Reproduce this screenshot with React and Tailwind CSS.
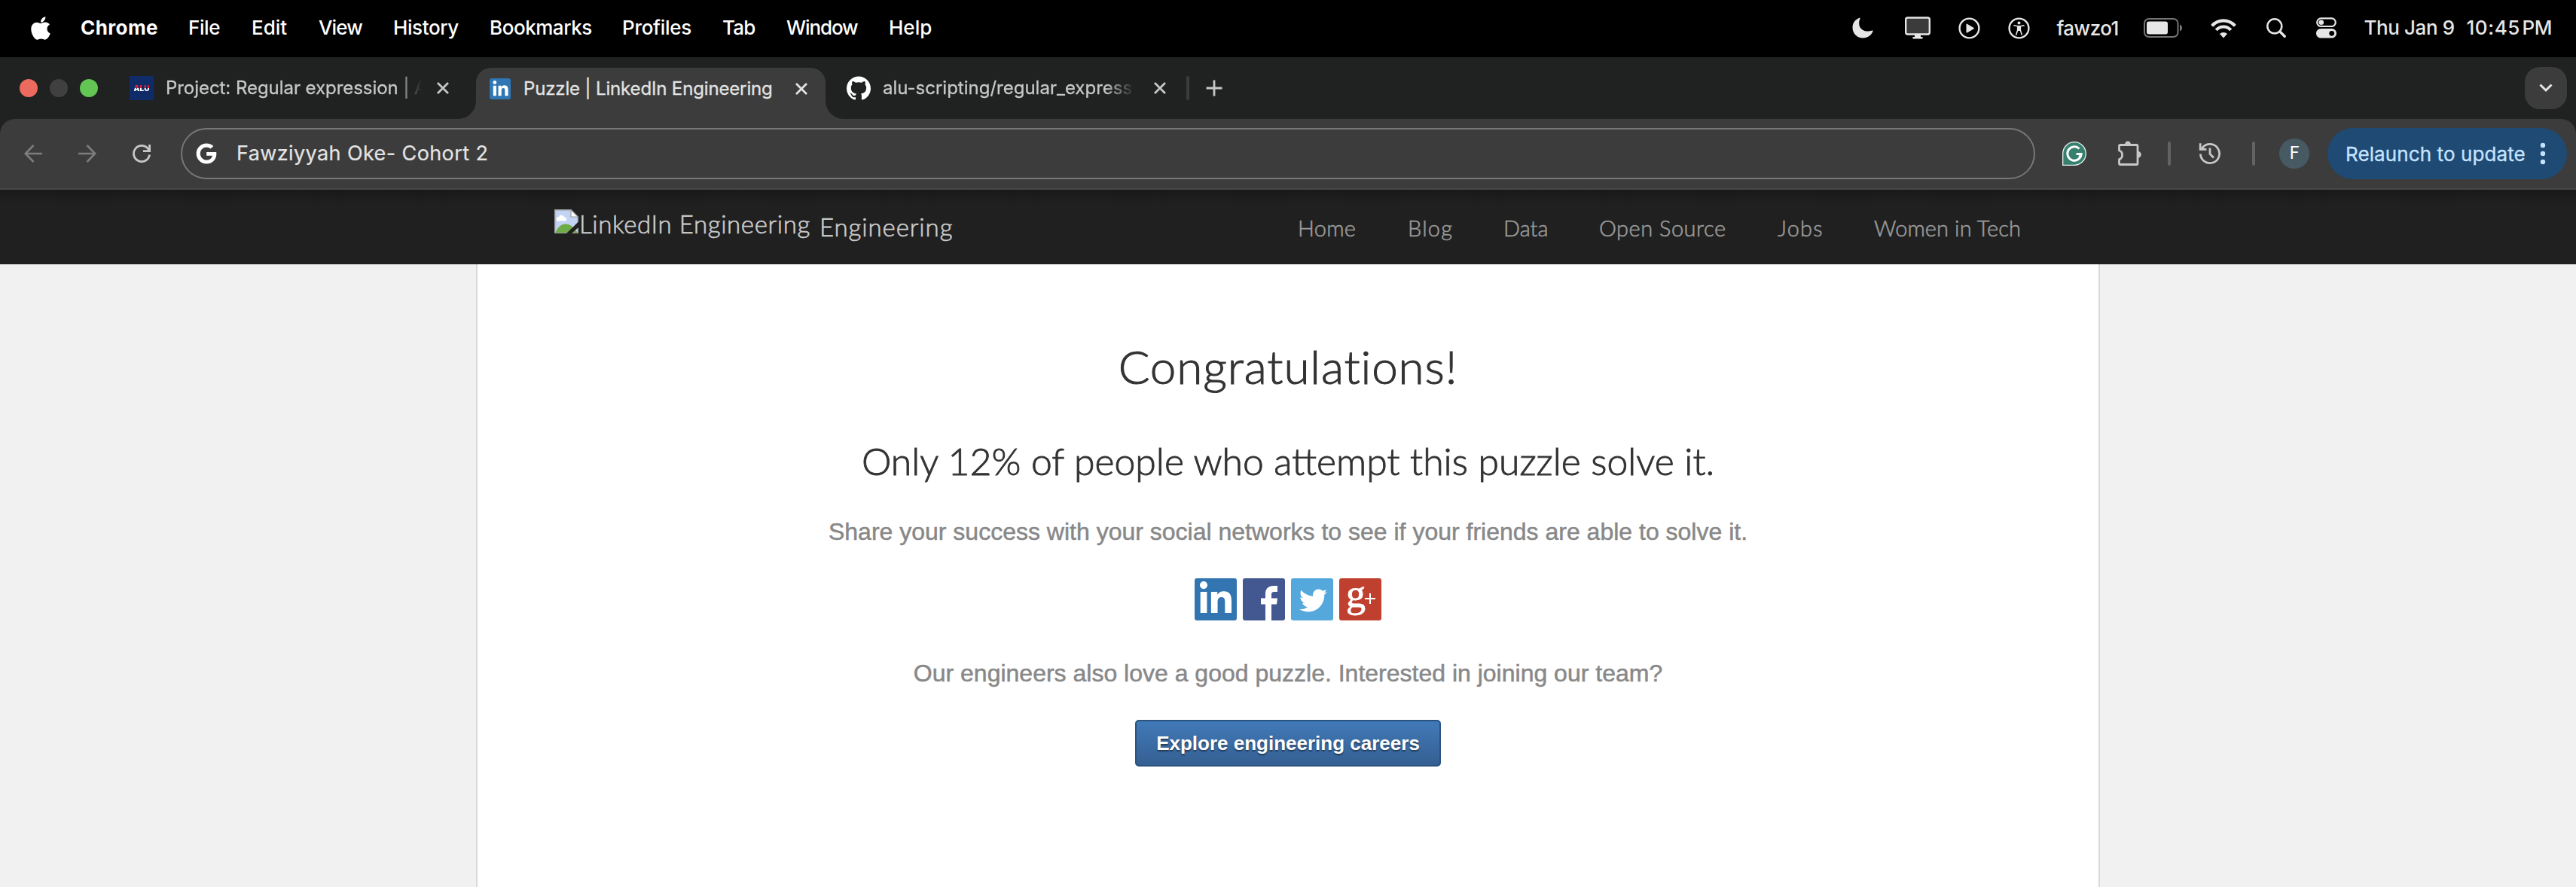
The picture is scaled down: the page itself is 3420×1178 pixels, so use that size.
import React from 'react';
import { FaApple, FaLinkedinIn, FaTwitter, FaGoogle } from 'react-icons/fa';
import { SiGithub } from 'react-icons/si';

const menus = [
  { label: 'Chrome', cls: 'w-[143px] font-bold tracking-[0.4px]' },
  { label: 'File', cls: 'w-[84px] tracking-[-0.4px]' },
  { label: 'Edit', cls: 'w-[89px]' },
  { label: 'View', cls: 'w-[99px] tracking-[-0.9px]' },
  { label: 'History', cls: 'w-[128px] tracking-[-0.4px]' },
  { label: 'Bookmarks', cls: 'w-[176px] tracking-[-0.45px]' },
  { label: 'Profiles', cls: 'w-[133px] tracking-[-0.3px]' },
  { label: 'Tab', cls: 'w-[85px] tracking-[-0.8px]' },
  { label: 'Window', cls: 'w-[136px] tracking-[-1.1px]' },
  { label: 'Help', cls: '' },
];

function MoonIcon() {
  return (
    <svg className="h-[28px] w-[28px]" viewBox="0 0 28 28" fill="#e6e6e6">
      <path d="M9.5 0.8C3.8 3 0.5 8 0.5 13.500C0.500 21.500 6.500 27.500 14.500 27.500C20.500 27.500 25.500 24 27.500 18.600C27.800 17.700 27.200 17.300 26.500 17.600C15.500 21.500 5.500 13.500 10.500 1.700C10.800 1 10.300 0.500 9.500 0.800Z" />
    </svg>
  );
}

function DisplayIcon() {
  return (
    <svg className="h-[30px] w-[34px]" viewBox="0 0 34 30">
      <rect x="1.200" y="1.500" width="31.600" height="22" rx="2.500" fill="#3b3b3b" stroke="#e6e6e6" strokeWidth="2.400" />
      <path d="M13 24h8v3h2.500v2.500h-13V27H13z" fill="#e6e6e6" />
    </svg>
  );
}

function PlayCircleIcon() {
  return (
    <svg className="h-[29px] w-[29px]" viewBox="0 0 29 29">
      <circle cx="14.500" cy="14.500" r="12.900" fill="none" stroke="#e6e6e6" strokeWidth="2.400" />
      <path d="M10.500 9.200v10.600c0 .7.500.9 1.100.6l8.600-5c.7-.4.700-1.200 0-1.600l-8.600-5c-.6-.4-1.100-.1-1.100.4z" fill="#e6e6e6" />
    </svg>
  );
}

function AccessibilityIcon() {
  return (
    <svg className="h-[29px] w-[29px]" viewBox="0 0 29 29" fill="none" stroke="#e6e6e6">
      <circle cx="14.500" cy="14.500" r="12.900" strokeWidth="2.400" />
      <circle cx="14.500" cy="7.500" r="2" fill="#e6e6e6" stroke="none" />
      <path d="M8 10.800l4.500 1h4l4.500-1M12.700 12v5l-1.900 6M16.300 12v5l1.900 6" strokeWidth="1.600" strokeLinecap="round" />
      <path d="M12.200 11.500h4.600v6.500h-4.600z" fill="#e6e6e6" stroke="none" />
    </svg>
  );
}

function BatteryIcon() {
  return (
    <svg className="h-[26px] w-[52px]" viewBox="0 0 52 26">
      <rect x="1" y="1" width="44.500" height="24" rx="6" fill="none" stroke="#757575" strokeWidth="2" />
      <rect x="4" y="4.500" width="28" height="17" rx="3" fill="#e6e6e6" />
      <path d="M48 8.500c4 1.500 4 7.500 0 9z" fill="#757575" />
    </svg>
  );
}

function WifiIcon() {
  return (
    <svg className="h-[27px] w-[34px]" viewBox="0 0 34 27" fill="none" stroke="#e6e6e6" strokeWidth="4.200">
      <path d="M1.700 10.300C10 1 24 1 32.300 10.300" />
      <path d="M7.300 15.900C12.500 10 21.500 10 26.700 15.900" />
      <path d="M17 26.500l-5-5.500c2.500-2.800 7.500-2.800 10 0z" fill="#e6e6e6" stroke="none" />
    </svg>
  );
}

function SearchIcon() {
  return (
    <svg className="h-[26px] w-[26px]" viewBox="0 0 26 26" fill="none" stroke="#e6e6e6">
      <circle cx="10.800" cy="10.800" r="9.500" strokeWidth="2.500" />
      <path d="M18 18l6.200 6.200" strokeWidth="3.400" strokeLinecap="round" />
    </svg>
  );
}

function ControlCenterIcon() {
  return (
    <svg className="h-[28px] w-[27px]" viewBox="0 0 27 28">
      <rect x="1.200" y="1.400" width="24.600" height="10.600" rx="5.300" fill="none" stroke="#e6e6e6" strokeWidth="2.200" />
      <circle cx="6.800" cy="6.700" r="3.300" fill="#e6e6e6" />
      <rect x="0" y="15" width="27" height="12.600" rx="6.300" fill="#e6e6e6" />
      <circle cx="20.700" cy="21.300" r="3.400" fill="#000" />
    </svg>
  );
}

function MenuBar() {
  return (
    <div className="flex h-[76px] items-center bg-black text-[26px] font-medium leading-[36px] text-white">
      <div className="flex w-full items-center pb-[2px]">
        <FaApple className="mr-[40px] ml-[41px] h-[35px] w-[26px]" />
        {menus.map((m) => (
          <span key={m.label} className={m.cls}>{m.label}</span>
        ))}
        <div className="mr-[32px] ml-auto flex items-center text-[#e6e6e6]">
          <MoonIcon />
          <span className="w-[42px]" />
          <DisplayIcon />
          <span className="w-[37px]" />
          <PlayCircleIcon />
          <span className="w-[37px]" />
          <AccessibilityIcon />
          <span className="w-[35px]" />
          <span className="w-[116px] pt-[2px] tracking-[-0.5px]">fawzo1</span>
          <BatteryIcon />
          <span className="w-[37px]" />
          <WifiIcon />
          <span className="w-[40px]" />
          <SearchIcon />
          <span className="w-[40px]" />
          <ControlCenterIcon />
          <span className="ml-[36px] w-[136px] tracking-[-0.4px]">Thu Jan 9</span>
          <span className="w-[74px] tracking-[0.6px]">10:45</span>
          <span className="tracking-[-0.4px]">PM</span>
        </div>
      </div>
    </div>
  );
}

function CloseIcon({ color }) {
  return (
    <svg className="h-[18px] w-[18px] shrink-0" viewBox="0 0 18 18" stroke={color} strokeWidth="2.800" fill="none">
      <path d="M2 2l14 14M16 2L2 16" />
    </svg>
  );
}

function TabStrip() {
  return (
    <div className="flex h-[82px] bg-[#202221] text-[24px] leading-[32px] text-[#c7c7c7] [-webkit-text-stroke:0.300px]">
      <div className="flex w-[608px] items-center pl-[26px]">
        <span className="mr-[16px] size-[24px] rounded-full bg-[#ed6a5e]" />
        <span className="mr-[16px] size-[24px] rounded-full bg-[#404040]" />
        <span className="mr-[42px] size-[24px] rounded-full bg-[#62c554]" />
        <span className="flex size-[32px] items-center justify-center bg-[#0f2c68]">
          <span className="bg-linear-to-b from-[#e0283a] from-50% to-white to-50% bg-clip-text text-[10px] leading-[12px] font-black text-transparent [-webkit-text-stroke:0px]">ALU</span>
        </span>
        <span className="ml-[16px] w-[340px] overflow-hidden mask-r-from-90% tracking-[-0.05px] whitespace-nowrap">Project: Regular expression | A</span>
        <span className="ml-[19px]"><CloseIcon color="#c7c7c7" /></span>
      </div>
      <div className="flex items-end">
        <div className="size-[24px] bg-[#3c3c3c]">
          <div className="size-[24px] rounded-br-[24px] bg-[#202221]" />
        </div>
        <div className="flex h-[68px] w-[464px] items-center rounded-t-[20px] bg-[#3c3c3c] pb-[12px] pl-[18px] text-[#e3e3e3]">
          <span className="flex size-[28px] items-center justify-center rounded-[3px] bg-[#2f76b5]">
            <FaLinkedinIn className="size-[23px] text-white" />
          </span>
          <span className="ml-[17px] w-[360px] tracking-[-0.15px]">Puzzle | LinkedIn Engineering</span>
          <CloseIcon color="#e3e3e3" />
        </div>
        <div className="size-[24px] bg-[#3c3c3c]">
          <div className="size-[24px] rounded-bl-[24px] bg-[#202221]" />
        </div>
      </div>
      <div className="flex flex-1 items-center pl-[4px]">
        <SiGithub className="size-[32px] text-white" />
        <span className="ml-[16px] w-[335px] overflow-hidden mask-r-from-88% whitespace-nowrap">alu-scripting/regular_express</span>
        <span className="ml-[24px]"><CloseIcon color="#c7c7c7" /></span>
        <span className="ml-[26px] h-[32px] w-[4px] rounded-full bg-[#3c3c3c]" />
        <svg className="ml-[22px] size-[22px]" viewBox="0 0 22 22" stroke="#c7c7c7" strokeWidth="2.800">
          <path d="M11 0.500v21M0.500 11h21" />
        </svg>
        <span className="mr-[12px] ml-auto flex size-[56px] items-center justify-center rounded-[20px] bg-[#3c3c3c]">
          <svg className="h-[12px] w-[18px]" viewBox="0 0 18 12" fill="none" stroke="#e3e3e3" strokeWidth="3">
            <path d="M1.500 1.500L9 9L16.500 1.500" />
          </svg>
        </span>
      </div>
    </div>
  );
}

function Toolbar() {
  return (
    <div className="bg-[#202221]">
      <div className="flex h-[94px] items-center rounded-t-[20px] border-b-2 border-[#484848] bg-[#3c3c3c]">
        <svg className="ml-[32px] size-[24px]" viewBox="0 0 24 24" fill="none" stroke="#7d7d7d" strokeWidth="2.600">
          <path d="M24 12H2M12.500 1L1.800 12L12.500 23" />
        </svg>
        <svg className="ml-[48px] size-[24px]" viewBox="0 0 24 24" fill="none" stroke="#7d7d7d" strokeWidth="2.600">
          <path d="M0 12h22M11.500 1L22.200 12L11.500 23" />
        </svg>
        <svg className="ml-[48px] size-[24px]" viewBox="0 0 24 24" fill="none" stroke="#c7c7c7" strokeWidth="2.800">
          <path d="M22.600 13.500A10.600 10.600 0 1 1 20.500 5.500L22 8" />
          <path d="M22.600 0V8.600H14" />
        </svg>
        <div className="ml-[40px] flex h-[68px] w-[2462px] items-center rounded-full border-2 border-[#777777] pl-[18px]">
          <FaGoogle className="h-[28px] w-[28px] text-white" />
          <span className="ml-[26px] text-[27px] leading-[36px] tracking-[0.4px] text-[#e3e3e3] [-webkit-text-stroke:0.200px]">Fawziyyah Oke- Cohort 2</span>
        </div>
        <svg className="ml-[36px] size-[32px]" viewBox="0 0 32 32">
          <path d="M0.700 31.300V16A15.300 15.300 0 1 1 16 31.300Z" fill="#37806f" stroke="#e8f2ef" strokeWidth="1.300" />
          <path d="M22.500 9.500A9.200 9.200 0 1 0 25.200 16.500H18.500M25.200 16.500L22.500 21" fill="none" stroke="#fff" strokeWidth="2.900" />
        </svg>
        <svg className="ml-[41px] h-[34px] w-[32px]" viewBox="0 0 32 34">
          <path d="M4 5.500H25.500A1.500 1.500 0 0 1 27 7V30A1.500 1.500 0 0 1 25.500 31.500H4A1.500 1.500 0 0 1 2.500 30V24.500C8 23 8 14.500 2.500 13V7A1.500 1.500 0 0 1 4 5.500Z" fill="none" stroke="#c7c7c7" strokeWidth="2.800" strokeLinejoin="round" />
          <path d="M10 5a4 4.500 0 0 1 8 0zM27.500 14a4.300 4.300 0 0 1 0 8.600z" fill="#c7c7c7" />
        </svg>
        <span className="ml-[35px] h-[32px] w-[4px] rounded-full bg-[#636363]" />
        <svg className="ml-[37px] size-[30px]" viewBox="0 0 30 30" fill="none" stroke="#c7c7c7" strokeWidth="2.800">
          <path d="M2.400 15.500A12.600 12.600 0 1 0 5.300 7L3 9.500" />
          <path d="M2.200 1.200V9.300H10.400M15 7.500V15.500L20 20.500" />
        </svg>
        <span className="ml-[41px] h-[32px] w-[4px] rounded-full bg-[#636363]" />
        <span className="ml-[32px] flex size-[40px] items-center justify-center rounded-full bg-[#475963] font-['Roboto'] text-[23px] leading-[28px] text-white">F</span>
        <div className="ml-[24px] flex h-[68px] w-[318px] items-center rounded-full bg-[#1f4a74] pl-[23px] text-[26px] leading-[36px] text-[#c5e3ff]">
          <span className="w-[259px] pt-px pl-px tracking-[0.1px] [-webkit-text-stroke:0.300px]">Relaunch to update</span>
          <svg className="h-[30px] w-[8px]" viewBox="0 0 8 30" fill="#c5e3ff">
            <circle cx="4" cy="4" r="3.200" />
            <circle cx="4" cy="15" r="3.200" />
            <circle cx="4" cy="26" r="3.200" />
          </svg>
        </div>
      </div>
    </div>
  );
}

function BrokenImage() {
  return (
    <svg className="mt-[1px] size-[32px]" viewBox="0 0 32 32">
      <path d="M0.700 0.700H22L31.300 10V31.300H0.700Z" fill="#c3d3f3" stroke="#9c9c9c" strokeWidth="1.400" />
      <path d="M4 15.500a3 3 0 0 1 1.500-5.500a4.500 4.500 0 0 1 8 .5a2.700 2.700 0 0 1 1.500 5z" fill="#fff" />
      <path d="M1.400 31C4 24 9 19.500 15 19.500C21 19.500 26 24 30.600 31Z" fill="#6fab46" />
      <path d="M22 0.700V10H31.300Z" fill="#fff" stroke="#9c9c9c" strokeWidth="1.200" />
      <path d="M32 16.500V24L23 32H16Z" fill="#202020" />
    </svg>
  );
}

const nav = [
  { label: 'Home', cls: 'w-[146px] tracking-[0.3px]' },
  { label: 'Blog', cls: 'w-[127px] tracking-[1.2px]' },
  { label: 'Data', cls: 'w-[127px]' },
  { label: 'Open Source', cls: 'w-[237px] tracking-[0.5px]' },
  { label: 'Jobs', cls: 'w-[128px] tracking-[1.2px]' },
  { label: 'Women in Tech', cls: 'tracking-[0.1px]' },
];

function SiteHeader() {
  return (
    <header className="flex h-[99px] items-start bg-linear-to-b from-[#191919] to-[#202020] to-20% pt-[25px] pl-[736px] font-['Lato'] text-[33px] leading-[40px] font-light text-[#cccccc] [-webkit-text-stroke:0.600px]">
      <BrokenImage />
      <span className="w-[320px] pl-px tracking-[0.6px]">LinkedIn Engineering</span>
      <span className="w-[635px] pt-[4px] tracking-[0.9px]">Engineering</span>
      <nav className="flex pt-[6px] text-[29px] text-[#999999]">
        {nav.map((n) => (
          <span key={n.label} className={n.cls}>{n.label}</span>
        ))}
      </nav>
    </header>
  );
}

function SocialRow() {
  return (
    <div className="mt-[42px] flex gap-[8px] text-white">
      <span className="flex size-[56px] items-center justify-center rounded-[3px] bg-[#3275b1]">
        <FaLinkedinIn className="h-[48px] w-[42px]" />
      </span>
      <span className="size-[56px] rounded-[3px] bg-[#435891]">
        <svg className="size-[56px]" viewBox="0 0 56 56" fill="currentColor">
          <path d="M30 56V34.500H24V26.500H30V21C30 13.500 34 10 41 10H46V18H42C39 18 38 19 38 22V26.500H46L45 34.500H38V56Z" />
        </svg>
      </span>
      <span className="flex size-[56px] items-center justify-center rounded-[3px] bg-[#55a8dc] pt-[2px] pl-[3px]">
        <FaTwitter className="size-[37px]" />
      </span>
      <span className="flex size-[56px] rounded-[3px] bg-[#c04030] pl-[9px]">
        <span className="w-[25px] font-['Liberation_Serif'] text-[52px] leading-[42px] [-webkit-text-stroke:0.800px]">g</span>
        <svg className="mt-[20px] size-[14px]" viewBox="0 0 14 14" stroke="currentColor" strokeWidth="2">
          <path d="M7 0v14M0 7h14" />
        </svg>
      </span>
    </div>
  );
}

export default function App() {
  return (
    <div className="flex h-[1178px] w-[3420px] flex-col overflow-hidden bg-[#f1f1f1] font-['Inter',sans-serif]">
      <MenuBar />
      <TabStrip />
      <Toolbar />
      <SiteHeader />
      <main className="mx-auto flex w-[2156px] flex-1 flex-col items-center border-x-2 border-[#d9d9d9] bg-white pt-[95px] font-['Liberation_Sans',Arial,sans-serif] text-[32px] leading-[40px] text-[#888888]">
        <h1 className="font-['Lato'] text-[62px] leading-[80px] font-light tracking-[0.85px] text-[#333333] [-webkit-text-stroke:1px_#333333]">Congratulations!</h1>
        <h2 className="mt-[56px] font-['Lato'] text-[49.900px] leading-[60px] font-light text-[#333333] [-webkit-text-stroke:0.900px_#333333]">Only 12% of people who attempt this puzzle solve it.</h2>
        <p className="mt-[44px] [-webkit-text-stroke:0.500px]">Share your success with your social networks to see if your friends are able to solve it.</p>
        <SocialRow />
        <p className="mt-[50px] [-webkit-text-stroke:0.500px]">Our engineers also love a good puzzle. Interested in joining our team?</p>
        <button className="mt-[42px] h-[62px] w-[406px] rounded-[5px] border-2 border-[#2a5380] bg-linear-to-b from-[#417ab8] to-[#355f92] text-[26px] leading-[32px] font-bold text-white text-shadow-[0_2px_2px_rgb(0_0_0/0.45)]">Explore engineering careers</button>
      </main>
    </div>
  );
}
